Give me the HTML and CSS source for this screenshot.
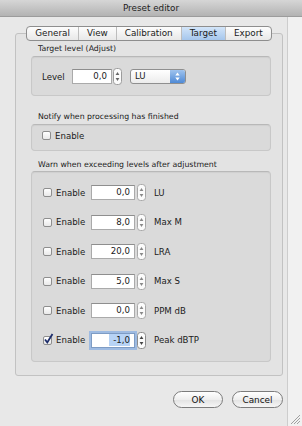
FILE: index.html
```html
<!DOCTYPE html>
<html lang="en">
<head>
    <meta charset="UTF-8">
    <title>Preset editor</title>
    <link rel="stylesheet" href="styles.css">
</head>
<body>

<div class="window">
    <div class="titlebar">Preset editor</div>

    <div class="content">
        <div class="tabview">
            <div class="tabs">
                <div class="tab-strip">
                    <span class="tab">General</span>
                    <span class="tab">View</span>
                    <span class="tab">Calibration</span>
                    <span class="tab active">Target</span>
                    <span class="tab">Export</span>
                </div>
            </div>

            <!-- Target level -->
            <div class="group-label">Target level (Adjust)</div>
            <div class="group level-box">
                <div class="row">
                    <span class="level-label">Level</span>
                    <span class="field short">0,0</span>
                    <svg class="stepper" width="9" height="17" viewBox="0 0 9 17">
                        <rect x="0.5" y="0.5" width="8" height="16" rx="3" fill="#fbfbfb" stroke="#9c9c9c"/>
                        <polygon points="4.5,4 2.6,7 6.4,7" fill="#666"/>
                        <polygon points="4.5,13 2.6,10 6.4,10" fill="#666"/>
                    </svg>
                    <span class="popup">
                        <span class="popup-text">LU</span>
                        <span class="popup-arrows">
                            <svg width="15" height="13" viewBox="0 0 15 13">
                                <polygon points="7.5,2.5 5.3,5.5 9.7,5.5" fill="#fff"/>
                                <polygon points="7.5,10.5 5.3,7.5 9.7,7.5" fill="#fff"/>
                            </svg>
                        </span>
                    </span>
                </div>
            </div>

            <!-- Notify -->
            <div class="group-label notify-label">Notify when processing has finished</div>
            <div class="group notify-box">
                <div class="check-row">
                    <span class="check"></span>
                    <span class="check-text">Enable</span>
                </div>
            </div>

            <!-- Warn levels -->
            <div class="group-label warn-label">Warn when exceeding levels after adjustment</div>
            <div class="group warn-box">
                <div class="row">
                    <span class="check"></span>
                    <span class="check-text">Enable</span>
                    <span class="field">0,0</span>
                    <svg class="stepper" width="9" height="17" viewBox="0 0 9 17"><rect x="0.5" y="0.5" width="8" height="16" rx="3" fill="#fbfbfb" stroke="#a8a8a8"/><polygon points="4.5,4 2.6,7 6.4,7" fill="#888"/><polygon points="4.5,13 2.6,10 6.4,10" fill="#888"/></svg>
                    <span class="unit">LU</span>
                </div>
                <div class="row">
                    <span class="check"></span>
                    <span class="check-text">Enable</span>
                    <span class="field">8,0</span>
                    <svg class="stepper" width="9" height="17" viewBox="0 0 9 17"><rect x="0.5" y="0.5" width="8" height="16" rx="3" fill="#fbfbfb" stroke="#a8a8a8"/><polygon points="4.5,4 2.6,7 6.4,7" fill="#888"/><polygon points="4.5,13 2.6,10 6.4,10" fill="#888"/></svg>
                    <span class="unit">Max M</span>
                </div>
                <div class="row">
                    <span class="check"></span>
                    <span class="check-text">Enable</span>
                    <span class="field">20,0</span>
                    <svg class="stepper" width="9" height="17" viewBox="0 0 9 17"><rect x="0.5" y="0.5" width="8" height="16" rx="3" fill="#fbfbfb" stroke="#a8a8a8"/><polygon points="4.5,4 2.6,7 6.4,7" fill="#888"/><polygon points="4.5,13 2.6,10 6.4,10" fill="#888"/></svg>
                    <span class="unit">LRA</span>
                </div>
                <div class="row">
                    <span class="check"></span>
                    <span class="check-text">Enable</span>
                    <span class="field">5,0</span>
                    <svg class="stepper" width="9" height="17" viewBox="0 0 9 17"><rect x="0.5" y="0.5" width="8" height="16" rx="3" fill="#fbfbfb" stroke="#a8a8a8"/><polygon points="4.5,4 2.6,7 6.4,7" fill="#888"/><polygon points="4.5,13 2.6,10 6.4,10" fill="#888"/></svg>
                    <span class="unit">Max S</span>
                </div>
                <div class="row">
                    <span class="check"></span>
                    <span class="check-text">Enable</span>
                    <span class="field">0,0</span>
                    <svg class="stepper" width="9" height="17" viewBox="0 0 9 17"><rect x="0.5" y="0.5" width="8" height="16" rx="3" fill="#fbfbfb" stroke="#a8a8a8"/><polygon points="4.5,4 2.6,7 6.4,7" fill="#888"/><polygon points="4.5,13 2.6,10 6.4,10" fill="#888"/></svg>
                    <span class="unit">PPM dB</span>
                </div>
                <div class="row">
                    <span class="check checked">
                        <svg width="11" height="12" viewBox="0 0 11 12">
                            <path d="M2 6.5 L4.3 9.5 L9.5 1" fill="none" stroke="#1d2d6b" stroke-width="1.8"/>
                        </svg>
                    </span>
                    <span class="check-text">Enable</span>
                    <span class="field focused"><span class="selected">-1,0</span></span>
                    <svg class="stepper" width="9" height="17" viewBox="0 0 9 17"><rect x="0.5" y="0.5" width="8" height="16" rx="3" fill="#fbfbfb" stroke="#8c8c8c"/><polygon points="4.5,4 2.6,7 6.4,7" fill="#444"/><polygon points="4.5,13 2.6,10 6.4,10" fill="#444"/></svg>
                    <span class="unit">Peak dBTP</span>
                </div>
            </div>
        </div>

        <div class="buttons">
            <button class="btn ok">OK</button>
            <button class="btn cancel">Cancel</button>
        </div>
    </div>

    <!-- resize grip -->
    <svg class="grip" width="10" height="10" viewBox="0 0 10 10">
        <line x1="1" y1="10" x2="10" y2="1" stroke="#a0a0a0"/>
        <line x1="4" y1="10" x2="10" y2="4" stroke="#a0a0a0"/>
        <line x1="7" y1="10" x2="10" y2="7" stroke="#a0a0a0"/>
    </svg>
</div>

</body>
</html>
```

FILE: styles.css
```css
body {
    margin: 0;
    font-family: "DejaVu Sans", sans-serif;
    color: #1a1a1a;
    background: #f1f1f1;
}
.window {
    position: relative;
    width: 302px;
    height: 426px;
    overflow: hidden;
    background: linear-gradient(to right, #e8e8e8 287px, #cdcdcd 287px, #cdcdcd 288px, #f1f1f1 288px);
}
.titlebar {
    height: 16px;
    line-height: 16px;
    text-align: center;
    font-size: 8.8px;
    color: #222;
    background: linear-gradient(#d6d6d6, #b3b3b3);
    border-bottom: 1px solid #9c9c9c;
}
.content {
    padding: 16px 19px 0 15px;
}
.tabview {
    border: 1px solid #c2c2c2;
    border-radius: 3px;
    background: #e3e3e3;
    padding: 0 11px 13px 15px;
}
.tabs {
    display: flex;
    justify-content: center;
    margin: -8px -11px 0 -15px;
}
.tab-strip {
    display: flex;
    height: 13px;
    border: 1px solid #8e8e8e;
    border-radius: 4px;
    overflow: hidden;
    background: linear-gradient(#fdfdfd, #e8e8e8);
}
.tab {
    padding: 0 8px;
    font-size: 8.8px;
    line-height: 13px;
    border-left: 1px solid #bdbdbd;
}
.tab:first-child {
    border-left: none;
}
.tab.active {
    background: linear-gradient(#d3e5f9, #a5c6ec);
}
.group-label {
    font-size: 7.8px;
    line-height: 10px;
    margin: 3px 0 2px 7px;
}
.notify-label {
    margin-top: 16px;
}
.warn-label {
    margin-top: 9px;
    margin-bottom: 1px;
}
.group {
    border: 1px solid #c8c8c8;
    border-top-color: #b8b8b8;
    border-radius: 4px;
    background: #dadada;
    box-shadow: inset 0 1px 1px rgba(0, 0, 0, 0.05);
}
.level-box {
    padding: 11px 10px 10px 10px;
}
.notify-box {
    padding: 5px 10px 9px 10px;
}
.warn-box {
    display: flex;
    flex-direction: column;
    gap: 12.5px;
    padding: 12px 10px 12.5px 11px;
}
.row {
    display: flex;
    align-items: center;
    height: 17px;
    font-size: 8.6px;
}
.level-label {
    width: 30px;
}
.field {
    box-sizing: border-box;
    width: 44px;
    height: 15px;
    padding-right: 4px;
    text-align: right;
    line-height: 13px;
    font-size: 8.6px;
    background: #fff;
    border: 1px solid #aaaaaa;
    border-top-color: #8e8e8e;
}
.field.short {
    width: 40px;
}
.field.focused {
    border-color: #7e9cc4;
    box-shadow: 0 0 0 2px #9ebbe2;
}
.selected {
    background: #b7d3f5;
    padding: 1px 0 1px 4px;
}
.stepper {
    display: block;
    margin-left: 2px;
}
.level-box .stepper {
    margin-left: 1px;
}
.popup {
    display: flex;
    box-sizing: border-box;
    width: 56px;
    height: 15px;
    margin-left: 8px;
    border: 1px solid #8f8f8f;
    border-radius: 3px;
    overflow: hidden;
    background: linear-gradient(#ffffff, #ececec);
}
.popup-text {
    flex: 1;
    padding-left: 4px;
    line-height: 13px;
}
.popup-arrows {
    width: 15px;
    height: 13px;
    background: linear-gradient(#9fc3ee, #4f8ad6);
}
.popup-arrows svg {
    display: block;
}
.check-row {
    display: flex;
    align-items: center;
    height: 11px;
    font-size: 8.6px;
}
.check {
    position: relative;
    box-sizing: border-box;
    width: 9px;
    height: 9px;
    border: 1px solid #8e8e8e;
    border-radius: 2px;
    background: linear-gradient(#ffffff, #e9e9e9);
}
.check.checked svg {
    position: absolute;
    left: -1px;
    top: -4px;
}
.check-text {
    width: 35px;
    margin-left: 4px;
}
.unit {
    margin-left: 8px;
}
.buttons {
    display: flex;
    justify-content: flex-end;
    gap: 9px;
    margin-top: 15px;
}
.btn {
    box-sizing: border-box;
    height: 17px;
    padding: 0;
    font-family: "DejaVu Sans", sans-serif;
    font-size: 8.9px;
    color: #111;
    border: 1px solid #7c7c7c;
    border-radius: 9px;
    background: linear-gradient(#ffffff, #eeeeee 50%, #e2e2e2 51%, #f6f6f6);
}
.ok {
    width: 50px;
}
.cancel {
    width: 51px;
}
.grip {
    position: absolute;
    right: 2px;
    bottom: 2px;
}
```
